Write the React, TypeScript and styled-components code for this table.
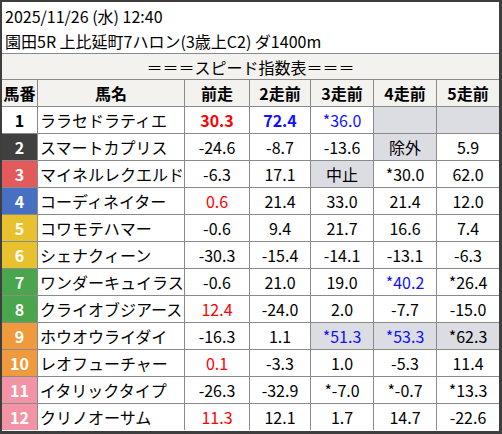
import styled, { createGlobalStyle } from 'styled-components';

const GlobalStyle = createGlobalStyle`
  body {
    margin: 0;
    background: #fff;
  }
`;

type Val = { t: string; c?: 'red' | 'blue'; bold?: boolean; gray?: boolean };

const frameColors: Record<number, [string, string]> = {
  1: ['#ffffff', '#000000'],
  2: ['#404040', '#ffffff'],
  3: ['#e45a5a', '#ffffff'],
  4: ['#4770c2', '#ffffff'],
  5: ['#e8c22e', '#ffffff'],
  6: ['#e8c22e', '#ffffff'],
  7: ['#4aa64d', '#ffffff'],
  8: ['#4aa64d', '#ffffff'],
  9: ['#f09a3e', '#ffffff'],
  10: ['#f09a3e', '#ffffff'],
  11: ['#f394a6', '#ffffff'],
  12: ['#f394a6', '#ffffff'],
};

const v = (t: string, extra: Partial<Val> = {}): Val => ({ t, ...extra });
const red = (t: string) => v(t, { c: 'red' });
const blue = (t: string) => v(t, { c: 'blue' });
const gray = (t: string) => v(t, { gray: true });

const horses: { no: number; name: string; vals: Val[] }[] = [
  { no: 1, name: 'ララセドラティエ', vals: [v('30.3', { c: 'red', bold: true }), v('72.4', { c: 'blue', bold: true }), blue('*36.0'), gray(''), gray('')] },
  { no: 2, name: 'スマートカプリス', vals: [v('-24.6'), v('-8.7'), v('-13.6'), gray('除外'), v('5.9')] },
  { no: 3, name: 'マイネルレクエルド', vals: [v('-6.3'), v('17.1'), gray('中止'), v('*30.0'), v('62.0')] },
  { no: 4, name: 'コーディネイター', vals: [red('0.6'), v('21.4'), v('33.0'), v('21.4'), v('12.0')] },
  { no: 5, name: 'コワモテハマー', vals: [v('-0.6'), v('9.4'), v('21.7'), v('16.6'), v('7.4')] },
  { no: 6, name: 'シェナクィーン', vals: [v('-30.3'), v('-15.4'), v('-14.1'), v('-13.1'), v('-6.3')] },
  { no: 7, name: 'ワンダーキュイラス', vals: [v('-0.6'), v('21.0'), v('19.0'), blue('*40.2'), v('*26.4')] },
  { no: 8, name: 'クライオブジアース', vals: [red('12.4'), v('-24.0'), v('2.0'), v('-7.7'), v('-15.0')] },
  { no: 9, name: 'ホウオウライダイ', vals: [v('-16.3'), v('1.1'), v('*51.3', { c: 'blue', gray: true }), v('*53.3', { c: 'blue', gray: true }), gray('*62.3')] },
  { no: 10, name: 'レオフューチャー', vals: [red('0.1'), v('-3.3'), v('1.0'), v('-5.3'), v('11.4')] },
  { no: 11, name: 'イタリックタイプ', vals: [v('-26.3'), v('-32.9'), v('*-7.0'), v('*-0.7'), v('*13.3')] },
  { no: 12, name: 'クリノオーサム', vals: [red('11.3'), v('12.1'), v('1.7'), v('14.7'), v('-22.6')] },
];

const heads = ['馬番', '馬名', '前走', '2走前', '3走前', '4走前', '5走前'];

const App = () => {
  return (
    <>
      <GlobalStyle />
      <Frame>
        <Info>
          <div>2025/11/26 (水) 12:40</div>
          <div>園田5R 上比延町7ハロン(3歳上C2) ダ1400m</div>
        </Info>
        <TitleBar>＝＝＝スピード指数表＝＝＝</TitleBar>
        <Row $head>
          {heads.map((h) => (
            <HeadCell key={h}>{h}</HeadCell>
          ))}
        </Row>
        {horses.map((h, i) => (
          <Row key={h.no} $last={i === horses.length - 1}>
            <NumCell $bg={frameColors[h.no][0]} $fg={frameColors[h.no][1]}>
              {h.no}
            </NumCell>
            <NameCell>{h.name}</NameCell>
            {h.vals.map((val, j) => (
              <Cell key={j} $gray={val.gray} $color={val.c} $bold={val.bold}>
                {val.t}
              </Cell>
            ))}
          </Row>
        ))}
      </Frame>
    </>
  );
};

export default App;

const Frame = styled.div`
  width: 502px;
  height: 434px;
  box-sizing: border-box;
  border-style: solid;
  border-color: #3e3e3e;
  border-width: 2px 3px 3px 2px;
  background: #fff;
  display: flex;
  flex-direction: column;
  font-family: "Noto Sans CJK JP", "Noto Sans", sans-serif;
  font-size: 16px;
  color: #000;
`;

const Info = styled.div`
  height: 52px;
  box-sizing: border-box;
  padding: 2px 0 0 3px;
  line-height: 25px;
  border-bottom: 1px solid #8a8a8a;
`;

const TitleBar = styled.div`
  height: 26px;
  box-sizing: border-box;
  border-bottom: 1px solid #8a8a8a;
  background: #f3f2ee;
  display: flex;
  align-items: center;
  justify-content: center;
  line-height: 1;
`;

const Row = styled.div<{ $head?: boolean; $last?: boolean }>`
  display: grid;
  grid-template-columns: 36px 147px 65px 61px 63px 63px 1fr;
  height: ${(p) => (p.$last ? '26px' : '27px')};
  box-sizing: border-box;
  border-bottom: ${(p) => (p.$last ? 'none' : '1px solid #8a8a8a')};
  background: ${(p) => (p.$head ? '#f3f2ee' : '#fff')};
`;

const Cell = styled.div<{ $gray?: boolean; $color?: 'red' | 'blue'; $bold?: boolean }>`
  display: flex;
  align-items: center;
  justify-content: center;
  border-right: 1px solid #8a8a8a;
  background: ${(p) => (p.$gray ? '#dcdce3' : 'transparent')};
  color: ${(p) => (p.$color === 'red' ? '#ff0000' : p.$color === 'blue' ? '#1010ff' : '#000')};
  font-weight: ${(p) => (p.$bold ? 700 : 400)};
  white-space: nowrap;
  &:last-child {
    border-right: none;
  }
`;

const HeadCell = styled(Cell)`
  font-weight: 700;
`;

const NumCell = styled(Cell)<{ $bg: string; $fg: string }>`
  background: ${(p) => p.$bg};
  color: ${(p) => p.$fg};
  font-weight: 700;
`;

const NameCell = styled(Cell)`
  justify-content: flex-start;
  padding-left: 2px;
  overflow: hidden;
`;
